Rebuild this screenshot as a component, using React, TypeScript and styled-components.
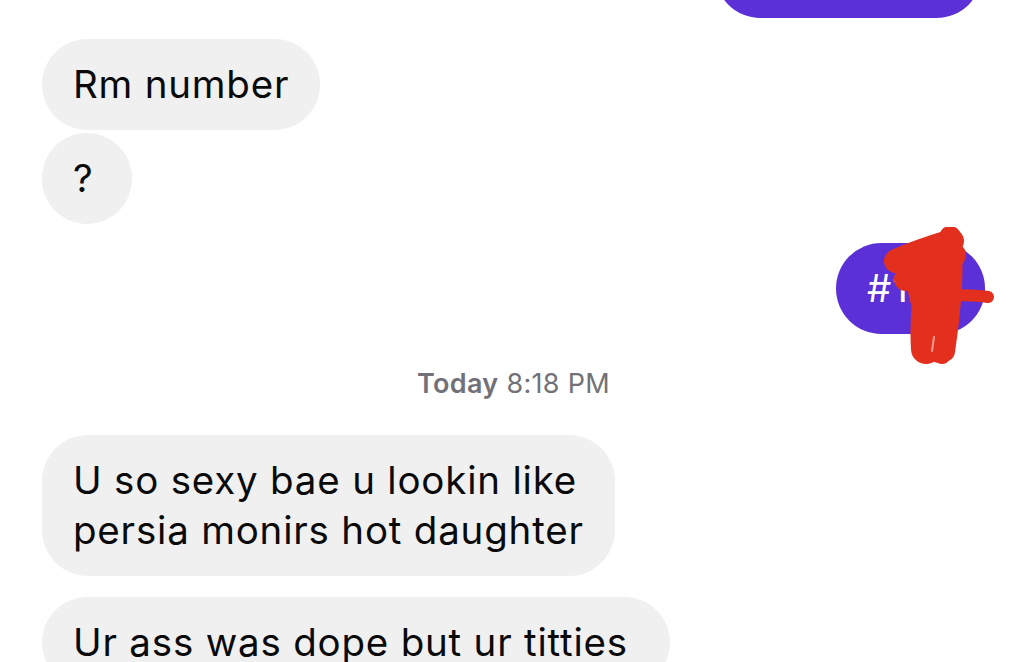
import React from "react";
import styled, { createGlobalStyle } from "styled-components";

const Global = createGlobalStyle`
  html, body { margin: 0; padding: 0; background: #ffffff; }
  body { font-family: Inter, "Liberation Sans", sans-serif; overflow: hidden; }
`;

const Thread = styled.div`
  width: 1024px;
  height: 662px;
  overflow: hidden;
  display: flex;
  flex-direction: column;
  padding: 0 39px 0 42px;
  box-sizing: border-box;
`;

const Row = styled.div<{ $mine?: boolean; $gap?: number }>`
  display: flex;
  justify-content: ${(p) => (p.$mine ? "flex-end" : "flex-start")};
  margin-top: ${(p) => p.$gap ?? 0}px;
  position: relative;
`;

const Bubble = styled.div<{ $mine?: boolean; $w?: number }>`
  background: ${(p) => (p.$mine ? "#5b30d7" : "#f0f0f0")};
  color: ${(p) => (p.$mine ? "#ffffff" : "#0a0a0a")};
  font-size: 38.5px;
  line-height: 50px;
  letter-spacing: 0.8px;
  padding: 20px 31px 21px 31px;
  border-radius: 46px;
  min-width: 28px;
  white-space: nowrap;
  position: relative;
  ${(p) => (p.$w ? `width: ${p.$w}px; box-sizing: border-box;` : "")}
`;

const TopBubble = styled(Bubble)`
  margin-top: -73px;
  margin-right: 3px;
  height: 91px;
  box-sizing: border-box;
`;

const Stamp = styled.div`
  text-align: center;
  font-size: 27px;
  letter-spacing: 0.3px;
  color: #717177;
  margin-top: 35px;
  margin-bottom: 36px;
  line-height: 30px;
  b { font-weight: 600; }
`;

const Scribble = styled.svg`
  position: absolute;
  left: 46px;
  top: -16px;
  width: 112px;
  height: 142px;
  pointer-events: none;
`;

export default function App() {
  return (
    <>
      <Global />
      <Thread>
        <Row $mine>
          <TopBubble $mine $w={267}>&nbsp;</TopBubble>
        </Row>
        <Row $gap={21}>
          <Bubble>Rm number</Bubble>
        </Row>
        <Row $gap={3}>
          <Bubble>?</Bubble>
        </Row>
        <Row $mine $gap={19}>
          <Bubble $mine $w={149}>
            #1
            <Scribble viewBox="0 0 112 142">
              <g stroke="#e3301e" strokeLinecap="round" strokeLinejoin="round" fill="none">
                <path d="M14 34 C32 26 50 20 70 14" strokeWidth="24" />
                <path d="M68 10 C72 44 68 84 62 124" strokeWidth="22" />
                <path d="M50 30 C46 62 42 92 44 122" strokeWidth="30" />
                <path d="M24 52 C46 46 62 40 72 28" strokeWidth="24" />
                <path d="M36 48 C42 70 46 90 50 104" strokeWidth="28" />
                <path d="M60 68 C78 68 94 68 106 70" strokeWidth="12" />
                <path d="M40 96 C44 118 50 126 60 128" strokeWidth="18" />
              </g>
              <path d="M52 110 L50 124" stroke="#ffffff" strokeWidth="2" opacity="0.5" strokeLinecap="round" />
            </Scribble>
          </Bubble>
        </Row>
        <Stamp>
          <b>Today</b> 8:18 PM
        </Stamp>
        <Row>
          <Bubble>
            U so sexy bae u lookin like
            <br />
            persia monirs hot daughter
          </Bubble>
        </Row>
        <Row $gap={21}>
          <Bubble $w={628}>Ur ass was dope but ur titties</Bubble>
        </Row>
      </Thread>
    </>
  );
}
